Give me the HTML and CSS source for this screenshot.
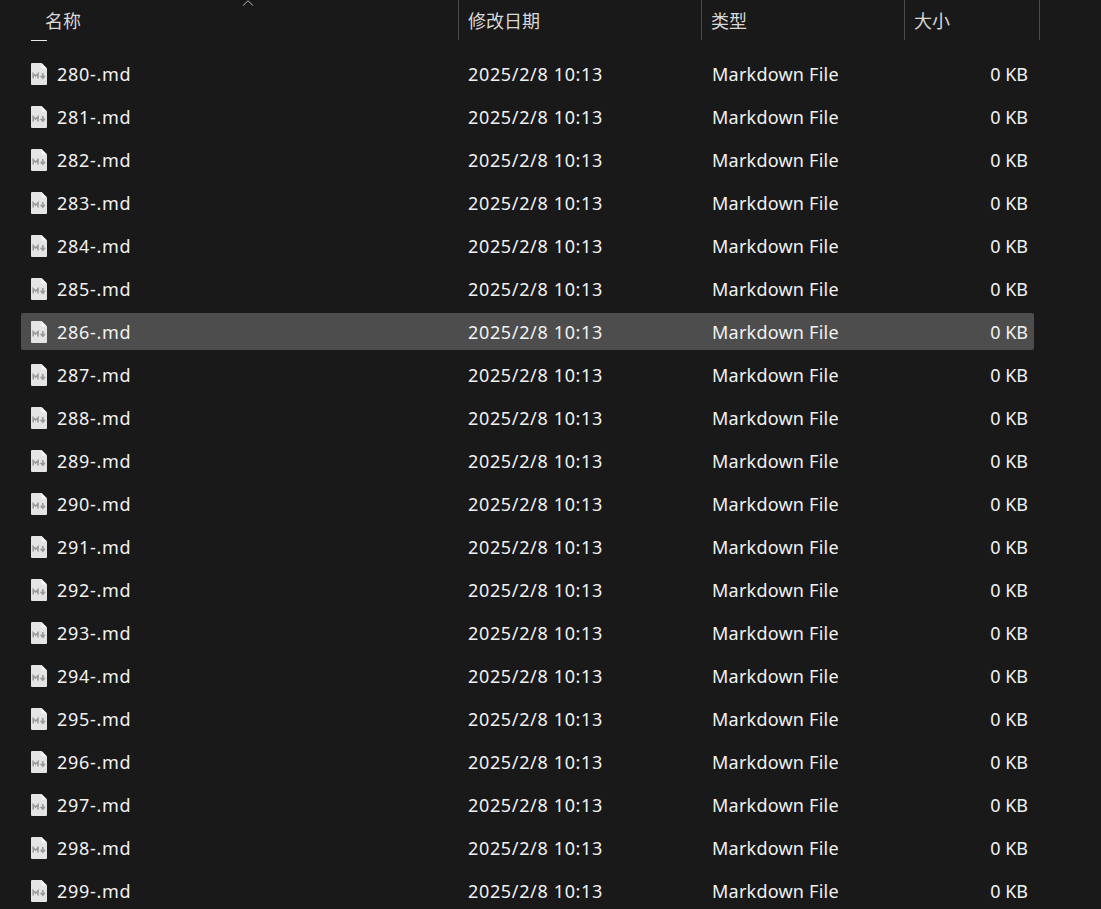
FILE: index.html
```html
<!DOCTYPE html>
<html lang="zh-CN">
<head>
    <meta charset="UTF-8">
    <title>文件列表</title>
    <link rel="stylesheet" href="styles.css">
</head>
<body>
    <svg class="defs" width="0" height="0">
        <symbol id="md-icon" viewBox="0 0 16 22">
            <path d="M1 0H10.5L16 5.5V21a1 1 0 0 1-1 1H1a1 1 0 0 1-1-1V1a1 1 0 0 1 1-1Z" fill="#e4e4e4"/>
            <path d="M10.5 0V5.5H16Z" fill="#f6f6f6"/>
            <path d="M2.2 15.5V10.6L4.6 13L7 10.6V15.5" fill="none" stroke="#9a9a9a" stroke-width="1.6"/>
            <path d="M11.8 10V15M9.6 12.8L11.8 15.2L14 12.8" fill="none" stroke="#9a9a9a" stroke-width="1.6"/>
        </symbol>
    </svg>

    <div class="header">
        <div class="head-col col-name">
            名称
            <svg class="sort-caret" width="12" height="6" viewBox="0 0 12 6"><path d="M1 5.5L6 0.8L11 5.5" fill="none" stroke="#b5b5b5"/></svg>
        </div>
        <div class="head-col col-date">修改日期</div>
        <div class="head-col col-type">类型</div>
        <div class="head-col col-size">大小</div>
    </div>
    <div class="sliver"></div>

    <div class="rows">
        <div class="row"><div class="name"><svg class="icon"><use href="#md-icon"/></svg>280-.md</div><div class="date">2025/2/8 10:13</div><div class="type">Markdown File</div><div class="size">0 KB</div></div>
        <div class="row"><div class="name"><svg class="icon"><use href="#md-icon"/></svg>281-.md</div><div class="date">2025/2/8 10:13</div><div class="type">Markdown File</div><div class="size">0 KB</div></div>
        <div class="row"><div class="name"><svg class="icon"><use href="#md-icon"/></svg>282-.md</div><div class="date">2025/2/8 10:13</div><div class="type">Markdown File</div><div class="size">0 KB</div></div>
        <div class="row"><div class="name"><svg class="icon"><use href="#md-icon"/></svg>283-.md</div><div class="date">2025/2/8 10:13</div><div class="type">Markdown File</div><div class="size">0 KB</div></div>
        <div class="row"><div class="name"><svg class="icon"><use href="#md-icon"/></svg>284-.md</div><div class="date">2025/2/8 10:13</div><div class="type">Markdown File</div><div class="size">0 KB</div></div>
        <div class="row"><div class="name"><svg class="icon"><use href="#md-icon"/></svg>285-.md</div><div class="date">2025/2/8 10:13</div><div class="type">Markdown File</div><div class="size">0 KB</div></div>
        <div class="row selected"><div class="name"><svg class="icon"><use href="#md-icon"/></svg>286-.md</div><div class="date">2025/2/8 10:13</div><div class="type">Markdown File</div><div class="size">0 KB</div></div>
        <div class="row"><div class="name"><svg class="icon"><use href="#md-icon"/></svg>287-.md</div><div class="date">2025/2/8 10:13</div><div class="type">Markdown File</div><div class="size">0 KB</div></div>
        <div class="row"><div class="name"><svg class="icon"><use href="#md-icon"/></svg>288-.md</div><div class="date">2025/2/8 10:13</div><div class="type">Markdown File</div><div class="size">0 KB</div></div>
        <div class="row"><div class="name"><svg class="icon"><use href="#md-icon"/></svg>289-.md</div><div class="date">2025/2/8 10:13</div><div class="type">Markdown File</div><div class="size">0 KB</div></div>
        <div class="row"><div class="name"><svg class="icon"><use href="#md-icon"/></svg>290-.md</div><div class="date">2025/2/8 10:13</div><div class="type">Markdown File</div><div class="size">0 KB</div></div>
        <div class="row"><div class="name"><svg class="icon"><use href="#md-icon"/></svg>291-.md</div><div class="date">2025/2/8 10:13</div><div class="type">Markdown File</div><div class="size">0 KB</div></div>
        <div class="row"><div class="name"><svg class="icon"><use href="#md-icon"/></svg>292-.md</div><div class="date">2025/2/8 10:13</div><div class="type">Markdown File</div><div class="size">0 KB</div></div>
        <div class="row"><div class="name"><svg class="icon"><use href="#md-icon"/></svg>293-.md</div><div class="date">2025/2/8 10:13</div><div class="type">Markdown File</div><div class="size">0 KB</div></div>
        <div class="row"><div class="name"><svg class="icon"><use href="#md-icon"/></svg>294-.md</div><div class="date">2025/2/8 10:13</div><div class="type">Markdown File</div><div class="size">0 KB</div></div>
        <div class="row"><div class="name"><svg class="icon"><use href="#md-icon"/></svg>295-.md</div><div class="date">2025/2/8 10:13</div><div class="type">Markdown File</div><div class="size">0 KB</div></div>
        <div class="row"><div class="name"><svg class="icon"><use href="#md-icon"/></svg>296-.md</div><div class="date">2025/2/8 10:13</div><div class="type">Markdown File</div><div class="size">0 KB</div></div>
        <div class="row"><div class="name"><svg class="icon"><use href="#md-icon"/></svg>297-.md</div><div class="date">2025/2/8 10:13</div><div class="type">Markdown File</div><div class="size">0 KB</div></div>
        <div class="row"><div class="name"><svg class="icon"><use href="#md-icon"/></svg>298-.md</div><div class="date">2025/2/8 10:13</div><div class="type">Markdown File</div><div class="size">0 KB</div></div>
        <div class="row"><div class="name"><svg class="icon"><use href="#md-icon"/></svg>299-.md</div><div class="date">2025/2/8 10:13</div><div class="type">Markdown File</div><div class="size">0 KB</div></div>
    </div>
</body>
</html>
```

FILE: styles.css
```css
html, body {
    height: 909px;
    overflow: hidden;
}
body {
    margin: 0;
    background-color: #191919;
    color: #f2f2f2;
    font-family: "Noto Sans", "Noto Sans CJK SC", sans-serif;
    font-size: 18px;
}
.defs {
    position: absolute;
}
/* Column headers */
.header {
    display: flex;
    height: 40px;
}
.head-col {
    position: relative;
    box-sizing: border-box;
    border-right: 1px solid #4a4a4a;
    padding-left: 9px;
    line-height: 40px;
    font-size: 18px;
    color: #d8d8d8;
    font-family: "Noto Sans CJK SC", sans-serif;
}
.col-name {
    width: 459px;
    padding-left: 45px;
}
.col-date {
    width: 243px;
}
.col-type {
    width: 203px;
}
.col-size {
    width: 135px;
}
.sort-caret {
    position: absolute;
    top: 0;
    left: 242px;
}
.sliver {
    width: 16px;
    height: 1px;
    margin: 0 0 14px 31px;
    background: #e8e8e8;
}
/* File rows */
.rows {
    display: flex;
    flex-direction: column;
    gap: 6px;
    margin-left: 21px;
    width: 1013px;
}
.row {
    display: grid;
    grid-template-columns: 437px 244px 193px 1fr;
    align-items: center;
    height: 37px;
    padding-left: 10px;
    padding-right: 6px;
    box-sizing: border-box;
    border-radius: 2px;
    white-space: nowrap;
}
.row.selected {
    background: #4d4d4d;
}
.name {
    display: flex;
    align-items: center;
    gap: 10px;
    letter-spacing: 0.7px;
}
.date {
    letter-spacing: 0.65px;
}
.type {
    letter-spacing: 0.23px;
}
.icon {
    width: 16px;
    height: 22px;
}
.size {
    text-align: right;
}
```
